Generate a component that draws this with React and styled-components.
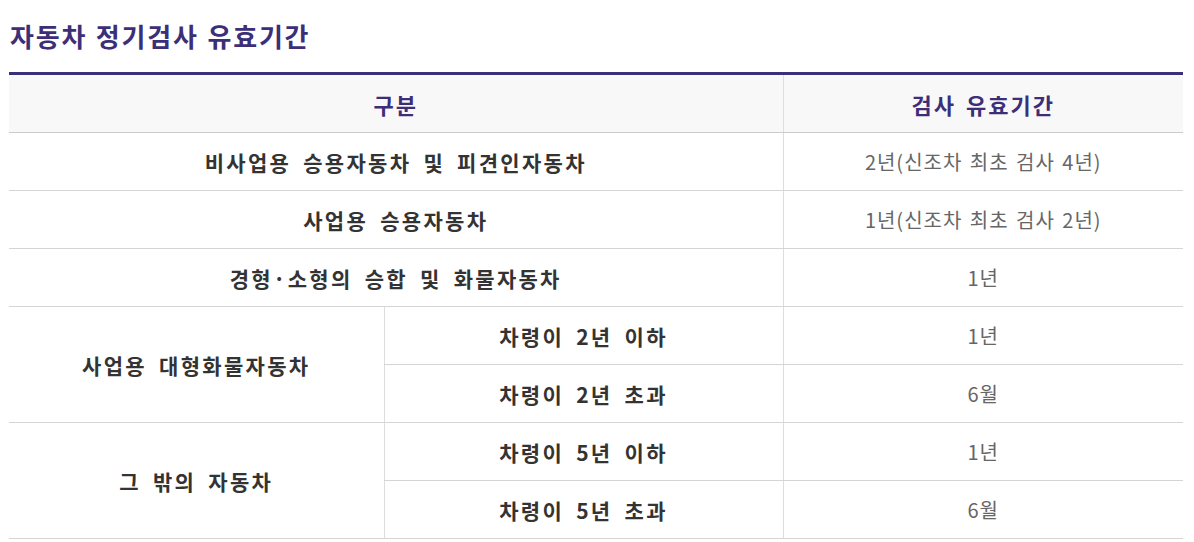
import React from "react";
import styled, { createGlobalStyle } from "styled-components";

const Global = createGlobalStyle`
  html, body { margin: 0; padding: 0; background: #fff; }
  body { font-family: "Noto Sans CJK KR", "Noto Sans", sans-serif; }
`;

const Page = styled.div`
  padding: 0 11px 0 9px;
`;

const Title = styled.h2`
  margin: 0;
  height: 70px;
  padding-bottom: 2px;
  display: flex;
  align-items: center;
  padding-left: 1px;
  font-size: 26px;
  font-weight: 700;
  color: #3c2f78;
  letter-spacing: 1.8px;
  word-spacing: 1px;
`;

const Table = styled.table`
  width: 100%;
  border-collapse: collapse;
  border-top: 3px solid #3c2f78;
  table-layout: fixed;
`;

const Th = styled.th`
  height: 57px;
  padding: 0;
  background: #f8f8f8;
  color: #3c2f78;
  font-size: 22px;
  font-weight: 700;
  letter-spacing: 2px;
  word-spacing: 3px;
  text-align: center;
  border-bottom: 1px solid #cccccc;
  border-left: ${(p) => (p.$first ? "none" : "1px solid #dddddd")};
`;

const Td = styled.td`
  height: 57px;
  padding: 0;
  text-align: center;
  border-bottom: 1px solid #d4d4d4;
  border-left: ${(p) => (p.$first ? "none" : "1px solid #dddddd")};
  font-size: ${(p) => (p.$value ? "20px" : "21px")};
  font-weight: ${(p) => (p.$value ? 400 : 700)};
  color: ${(p) => (p.$value ? "#666666" : "#333333")};
  letter-spacing: ${(p) => (p.$value ? "1px" : "2.3px")};
  word-spacing: ${(p) => (p.$value ? "2px" : "5px")};
`;

const rows = [
  { label: "비사업용 승용자동차 및 피견인자동차", value: "2년(신조차 최초 검사 4년)" },
  { label: "사업용 승용자동차", value: "1년(신조차 최초 검사 2년)" },
  { label: "경형·소형의 승합 및 화물자동차", value: "1년" },
];

const groups = [
  {
    label: "사업용 대형화물자동차",
    items: [
      { sub: "차령이 2년 이하", value: "1년" },
      { sub: "차령이 2년 초과", value: "6월" },
    ],
  },
  {
    label: "그 밖의 자동차",
    items: [
      { sub: "차령이 5년 이하", value: "1년" },
      { sub: "차령이 5년 초과", value: "6월" },
    ],
  },
];

export default function App() {
  return (
    <Page>
      <Global />
      <Title>자동차 정기검사 유효기간</Title>
      <Table>
        <colgroup>
          <col style={{ width: "375px" }} />
          <col style={{ width: "399px" }} />
          <col style={{ width: "400px" }} />
        </colgroup>
        <thead>
          <tr>
            <Th $first colSpan={2}>구분</Th>
            <Th>검사 유효기간</Th>
          </tr>
        </thead>
        <tbody>
          {rows.map((r) => (
            <tr key={r.label}>
              <Td $first colSpan={2}>{r.label}</Td>
              <Td $value>{r.value}</Td>
            </tr>
          ))}
          {groups.map((g) =>
            g.items.map((it, i) => (
              <tr key={g.label + i}>
                {i === 0 && (
                  <Td $first rowSpan={g.items.length}>{g.label}</Td>
                )}
                <Td>{it.sub}</Td>
                <Td $value>{it.value}</Td>
              </tr>
            ))
          )}
        </tbody>
      </Table>
    </Page>
  );
}
